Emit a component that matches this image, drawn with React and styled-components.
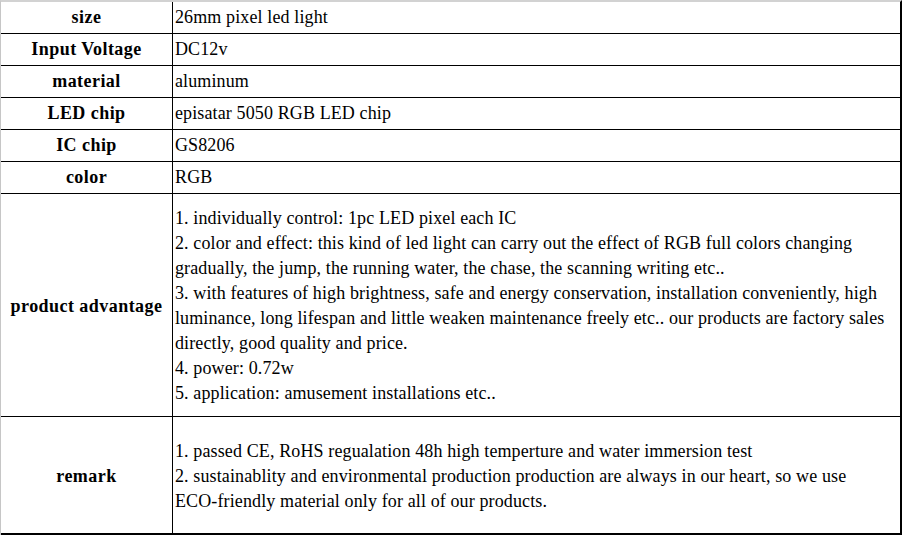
import React from "react";
import styled, { createGlobalStyle } from "styled-components";

const Global = createGlobalStyle`
  html, body { margin: 0; padding: 0; background: #ffffff; }
  body { font-family: "Liberation Serif", "Times New Roman", serif; color: #000; }
`;

const Sheet = styled.div`
  width: 902px;
  height: 535px;
  box-sizing: border-box;
  border-top: 2px solid #d2d2d2;
  border-left: 1px solid #c6c6c6;
  border-right: 2px solid #000;
  display: flex;
  flex-direction: column;
  overflow: hidden;
`;

const Row = styled.div`
  display: grid;
  grid-template-columns: 172px 1fr;
  height: ${(p) => p.$h}px;
  box-sizing: border-box;
  border-bottom: ${(p) => (p.$last ? 2 : 1)}px solid #000;
`;

const Label = styled.div`
  border-right: 1px solid #000;
  display: flex;
  align-items: center;
  justify-content: center;
  font-weight: bold;
  font-size: 18px;
  letter-spacing: 0.45px;
  text-align: center;
  padding: ${(p) => (p.$multi ? "3px 0 0 0" : "0 0 1px 0")};
`;

const Value = styled.div`
  display: flex;
  flex-direction: column;
  justify-content: center;
  padding: ${(p) => (p.$multi ? "2px 1px 0 2px" : "0 1px 1px 2px")};
  font-size: 18px;
  letter-spacing: 0.12px;
  line-height: 25px;
`;

const Line = styled.div``;

const NoBreak = styled.span`
  white-space: nowrap;
`;

const rows = [
  { label: "size", lines: ["26mm pixel led light"], h: 32 },
  { label: "Input Voltage", lines: ["DC12v"], h: 32 },
  { label: "material", lines: ["aluminum"], h: 32 },
  { label: "LED chip", lines: ["episatar 5050 RGB LED chip"], h: 32 },
  { label: "IC chip", lines: ["GS8206"], h: 32 },
  { label: "color", lines: ["RGB"], h: 32 },
  {
    label: "product advantage",
    h: 223,
    lines: [
      "1. individually control: 1pc LED pixel each IC",
      "2. color and effect: this kind of led light can carry out the effect of RGB full colors changing gradually, the jump, the running water, the chase, the scanning writing etc..",
      "3. with features of high brightness, safe and energy conservation, installation conveniently, high luminance, long lifespan and little weaken maintenance freely etc.. our products are factory sales directly, good quality and price.",
      "4. power: 0.72w",
      "5. application: amusement installations etc..",
    ],
  },
  {
    label: "remark",
    h: 118,
    last: true,
    lines: [
      "1. passed CE, RoHS regualation 48h high temperture and water immersion test",
      <>
        2. sustainablity and environmental production production are always in
        our heart, so we use <NoBreak>ECO-friendly</NoBreak> material only for
        all of our products.
      </>,
    ],
  },
];

export default function App() {
  return (
    <>
      <Global />
      <Sheet>
        {rows.map((r) => {
          const multi = r.lines.length > 1;
          return (
            <Row key={r.label} $h={r.h} $last={r.last}>
              <Label $multi={multi}>{r.label}</Label>
              <Value $multi={multi}>
                {r.lines.map((l, i) => (
                  <Line key={i}>{l}</Line>
                ))}
              </Value>
            </Row>
          );
        })}
      </Sheet>
    </>
  );
}
